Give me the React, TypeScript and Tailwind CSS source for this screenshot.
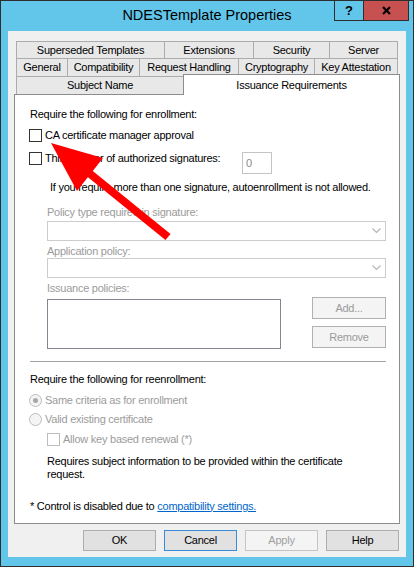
import React from "react";

const Tab = ({ label, w, last }: { label: string; w: string; last?: boolean }) => (
  <div
    className={`${w} h-full flex items-center justify-center border-l border-t border-[#acacac] bg-[#e8e8e8] whitespace-nowrap ${last ? "border-r" : ""}`}
  >
    {label}
  </div>
);

const Checkbox = ({ disabled }: { disabled?: boolean }) => (
  <div
    className={`w-[13px] h-[13px] shrink-0 border bg-white ${disabled ? "border-[#bcbcbc]" : "border-[#333333]"}`}
  />
);

const Radio = ({ checked }: { checked?: boolean }) => (
  <div className="w-[13px] h-[13px] shrink-0 rounded-full border border-[#bcbcbc] bg-[#f4f4f4] flex items-center justify-center">
    {checked && <div className="w-[5px] h-[5px] rounded-full bg-[#a8a8a8]" />}
  </div>
);

const Chevron = () => (
  <svg width="9" height="6" viewBox="0 0 9 6" className="mr-[4px]">
    <polyline points="0.5,0.5 4.5,4.5 8.5,0.5" fill="none" stroke="#b5b5b5" strokeWidth="1.2" />
  </svg>
);

const Combo = () => (
  <div className="ml-[17px] w-[339px] h-[20px] border border-[#cccccc] bg-white flex items-center justify-end">
    <Chevron />
  </div>
);

export default function App() {
  return (
    <div className="relative w-[414px] h-[567px] bg-[#62c6ea] border border-[#2e2e2e] flex flex-col overflow-hidden font-['Liberation_Sans',Arial,sans-serif] text-[11px] tracking-[-0.25px] text-black">
      {/* Title bar */}
      <div className="relative h-[30px] shrink-0 flex items-center justify-center">
        <span className="text-[14.5px] tracking-normal text-black">NDESTemplate Properties</span>
        <div className="absolute top-0 right-[4px] flex h-[20px] border-l border-r border-b border-[#2e2e2e]">
          <div className="w-[28px] h-full flex items-center justify-center bg-[#62c6ea] text-[13px] font-bold tracking-normal leading-none">
            ?
          </div>
          <div className="w-[45px] h-full border-l border-[#2e2e2e] bg-[#c75050] flex items-center justify-center">
            <svg width="9" height="9" viewBox="0 0 9 9">
              <line x1="1" y1="1" x2="8" y2="8" stroke="#000" strokeWidth="2.2" />
              <line x1="8" y1="1" x2="1" y2="8" stroke="#000" strokeWidth="2.2" />
            </svg>
          </div>
        </div>
      </div>

      {/* Client area */}
      <div className="mx-[7px] h-[526px] shrink-0 bg-[#f0f0f0] flex flex-col">
        <div className="pt-[10px] px-[6px] flex flex-col">
          {/* Tab rows */}
          <div className="ml-[2px] flex h-[17px]">
            <Tab label="Superseded Templates" w="w-[148px]" />
            <Tab label="Extensions" w="w-[89px]" />
            <Tab label="Security" w="w-[76px]" />
            <Tab label="Server" w="w-[69px]" last />
          </div>
          <div className="ml-[2px] flex h-[18px]">
            <Tab label="General" w="w-[51px]" />
            <Tab label="Compatibility" w="w-[72px]" />
            <Tab label="Request Handling" w="w-[99px]" />
            <Tab label="Cryptography" w="w-[76px]" />
            <Tab label="Key Attestation" w="w-[84px]" last />
          </div>
          <div className="ml-[2px] flex items-start h-[18px]">
            <Tab label="Subject Name" w="w-[167px]" />
            <div className="relative -top-[2px] z-10 w-[217px] h-[21px] bg-white border-l border-t border-r border-[#8c8c8c] flex items-center justify-center whitespace-nowrap">
              Issuance Requirements
            </div>
          </div>

          {/* Panel */}
          <div className="h-[430px] border border-[#8c8c8c] bg-white flex flex-col pl-[15px] whitespace-nowrap">
            <div className="mt-[12px] h-[14px] flex items-center">Require the following for enrollment:</div>
            <div className="mt-[7px] h-[14px] flex items-center -ml-[1px]">
              <Checkbox />
              <span className="ml-[3px]">CA certificate manager approval</span>
            </div>
            <div className="mt-[10px] h-[22px] flex items-start">
              <div className="w-[213px] -ml-[1px] h-[13px] flex items-center">
                <Checkbox />
                <span className="ml-[3px]">This number of authorized signatures:</span>
              </div>
              <div className="w-[30px] h-[22px] border border-[#c4c4c4] bg-white flex items-center pl-[3px] text-[#8a8a8a]">
                0
              </div>
            </div>
            <div className="mt-[6px] h-[14px] flex items-center pl-[20px]">
              If you require more than one signature, autoenrollment is not allowed.
            </div>
            <div className="mt-[11px] h-[14px] flex items-center pl-[17px] text-[#9b9b9b]">
              Policy type required in signature:
            </div>
            <div className="mt-[2px]">
              <Combo />
            </div>
            <div className="mt-[4px] h-[13px] flex items-center pl-[17px] text-[#9b9b9b]">Application policy:</div>
            <Combo />
            <div className="mt-[3px] h-[14px] flex items-center pl-[17px] text-[#9b9b9b]">Issuance policies:</div>
            <div className="mt-[2px] ml-[17px] flex items-start">
              <div className="mt-[2px] w-[234px] h-[50px] border border-[#828790] bg-white" />
              <div className="ml-[31px] flex flex-col">
                <div className="w-[74px] h-[22px] border border-[#adb2b5] bg-[#f4f4f4] text-[#9b9b9b] flex items-center justify-center">
                  Add...
                </div>
                <div className="mt-[7px] w-[74px] h-[22px] border border-[#adb2b5] bg-[#f4f4f4] text-[#9b9b9b] flex items-center justify-center">
                  Remove
                </div>
              </div>
            </div>
            <div className="mt-[12px] w-[356px] h-[1px] bg-[#a0a0a0]" />
            <div className="mt-[10px] h-[14px] flex items-center">Require the following for reenrollment:</div>
            <div className="mt-[7px] h-[14px] flex items-center -ml-[1px] text-[#9b9b9b]">
              <Radio checked />
              <span className="ml-[3px]">Same criteria as for enrollment</span>
            </div>
            <div className="mt-[5px] h-[14px] flex items-center -ml-[1px] text-[#9b9b9b]">
              <Radio />
              <span className="ml-[3px]">Valid existing certificate</span>
            </div>
            <div className="mt-[6px] h-[14px] flex items-center ml-[17px] text-[#9b9b9b]">
              <Checkbox disabled />
              <span className="ml-[3px]">Allow key based renewal (*)</span>
            </div>
            <div className="mt-[9px] pl-[17px] leading-[13px] flex flex-col">
              <span>Requires subject information to be provided within the certificate</span>
              <span>request.</span>
            </div>
            <div className="mt-[18px] h-[14px] flex items-center">
              <span>* Control is disabled due to&nbsp;</span>
              <span className="text-[#0066cc] underline">compatibility settings.</span>
            </div>
          </div>
        </div>

        {/* Dialog buttons */}
        <div className="mt-[6px] flex justify-end gap-[8px] pr-[7px]">
          <div className="w-[73px] h-[21px] border border-[#adadad] bg-[#e1e1e1] flex items-center justify-center">OK</div>
          <div className="w-[73px] h-[21px] border border-[#3a8cd9] bg-[#e1e1e1] flex items-center justify-center">Cancel</div>
          <div className="w-[73px] h-[21px] border border-[#c4c4c4] bg-[#f4f4f4] text-[#a0a0a0] flex items-center justify-center">Apply</div>
          <div className="w-[73px] h-[21px] border border-[#adadad] bg-[#e1e1e1] flex items-center justify-center">Help</div>
        </div>
      </div>

      {/* Red annotation arrow */}
      <svg
        className="absolute left-[-1px] top-[-1px] z-20 pointer-events-none"
        width="414"
        height="567"
        viewBox="0 0 414 567"
      >
        <line x1="89" y1="173" x2="168" y2="237" stroke="#ff0000" strokeWidth="8" />
        <polygon points="51,143 77,191 103,158" fill="#ff0000" />
      </svg>
    </div>
  );
}
